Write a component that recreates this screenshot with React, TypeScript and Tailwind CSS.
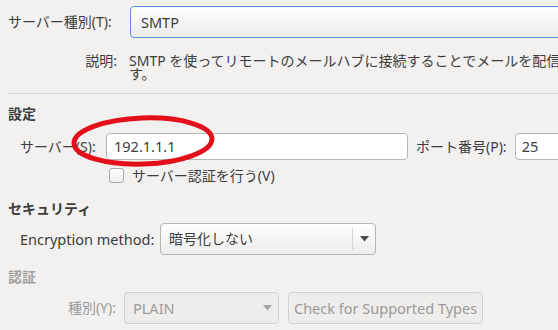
const font = { fontFamily: '"Noto Sans", "Noto Sans CJK JP", sans-serif' };

function Arrow({ color = "#4c4c4c" }: { color?: string }) {
  return (
    <svg width="9" height="6" viewBox="0 0 9 6">
      <path d="M0 0 H9 L4.5 5.5 Z" fill={color} />
    </svg>
  );
}

export default function App() {
  return (
    <div
      className="relative w-[558px] h-[330px] overflow-hidden bg-[#f2f1f0] text-[14px] text-[#3c3c3c] leading-none"
      style={font}
    >
      <div className="flex flex-col pt-[6px]">
        {/* server type */}
        <div className="flex items-center h-[32px]">
          <div className="shrink-0 w-[117px] pl-[8px] whitespace-nowrap">サーバー種別(T):</div>
          <div className="shrink-0 ml-[13px] w-[450px] h-[32px] rounded-[4px] border border-[#5294e2] bg-gradient-to-b from-white to-[#ebebeb] flex items-center pl-[10px] text-[14.5px]">
            SMTP
          </div>
        </div>
        {/* description */}
        <div className="flex mt-[16px]">
          <div className="shrink-0 w-[117px] text-right whitespace-nowrap">説明:</div>
          <div className="shrink-0 ml-[12px] leading-[13px] whitespace-nowrap">
            <div>SMTP を使ってリモートのメールハブに接続することでメールを配信しま</div>
            <div>す。</div>
          </div>
        </div>
        <div className="ml-[8px] mt-[13px] h-px bg-[#dad8d6]" />

        {/* settings */}
        <div className="pl-[8px] mt-[13px] font-bold">設定</div>
        <div className="flex items-center mt-[12px] h-[27px]">
          <div className="shrink-0 w-[98px] pl-[20px] whitespace-nowrap">サーバー(S):</div>
          <div className="shrink-0 ml-[8px] w-[302px] h-[27px] rounded-[4px] border border-[#b6b6b3] bg-white flex items-center pl-[7px] text-[14.5px]">
            192.1.1.1
          </div>
          <div className="shrink-0 ml-[8px] whitespace-nowrap">ポート番号(P):</div>
          <div className="shrink-0 ml-[8px] w-[60px] h-[27px] rounded-[4px] border border-[#b6b6b3] bg-white flex items-center pl-[6px] text-[14.5px]">
            25
          </div>
        </div>
        <div className="flex items-center mt-[8px] ml-[109px]">
          <div className="shrink-0 w-[15px] h-[15px] rounded-[3px] border border-[#a9a9a6] bg-gradient-to-b from-white to-[#ededed]" />
          <div className="ml-[8px] whitespace-nowrap">サーバー認証を行う(V)</div>
        </div>

        {/* security */}
        <div className="pl-[8px] mt-[19px] font-bold">セキュリティ</div>
        <div className="flex items-center mt-[7px] h-[32px]">
          <div className="shrink-0 pl-[20px] w-[152px] whitespace-nowrap text-[14.5px]">Encryption method:</div>
          <div className="shrink-0 ml-[8px] w-[216px] h-[32px] rounded-[4px] border border-[#b6b6b3] bg-gradient-to-b from-white to-[#ececec] flex items-center">
            <div className="flex-1 pl-[8px]">暗号化しない</div>
            <div className="w-px h-[22px] bg-[#d6d6d4]" />
            <div className="w-[22px] flex justify-center">
              <Arrow />
            </div>
          </div>
        </div>

        {/* auth */}
        <div className="pl-[8px] mt-[15px] font-bold text-[#a1a09e]">認証</div>
        <div className="flex items-center mt-[8px] h-[32px] text-[#9b9a98]">
          <div className="shrink-0 w-[116px] text-right whitespace-nowrap">種別(Y):</div>
          <div className="shrink-0 ml-[8px] w-[155px] h-[32px] rounded-[4px] border border-[#d2d1cf] bg-[#eeedec] flex items-center">
            <div className="flex-1 pl-[8px] text-[14.5px]">PLAIN</div>
            <div className="w-[22px] flex justify-center">
              <Arrow color="#a5a5a3" />
            </div>
          </div>
          <div className="shrink-0 ml-[9px] h-[32px] rounded-[4px] border border-[#d2d1cf] bg-[#eeedec] flex items-center px-[5px] whitespace-nowrap text-[14.5px]">
            Check for Supported Types
          </div>
        </div>
      </div>

      {/* red annotation ellipse */}
      <svg className="absolute left-0 top-0 pointer-events-none" width="558" height="330">
        <ellipse
          cx="143"
          cy="141"
          rx="69"
          ry="23"
          fill="none"
          stroke="#e3101c"
          strokeWidth="5"
          transform="rotate(-2 143 141)"
        />
      </svg>
    </div>
  );
}
